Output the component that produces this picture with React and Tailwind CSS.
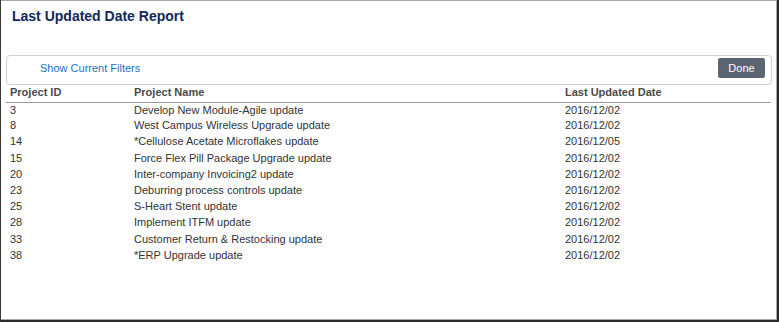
const rows = [
  ["3", "Develop New Module-Agile update", "2016/12/02"],
  ["8", "West Campus Wireless Upgrade update", "2016/12/02"],
  ["14", "*Cellulose Acetate Microflakes update", "2016/12/05"],
  ["15", "Force Flex Pill Package Upgrade update", "2016/12/02"],
  ["20", "Inter-company Invoicing2 update", "2016/12/02"],
  ["23", "Deburring process controls update", "2016/12/02"],
  ["25", "S-Heart Stent update", "2016/12/02"],
  ["28", "Implement ITFM update", "2016/12/02"],
  ["33", "Customer Return & Restocking update", "2016/12/02"],
  ["38", "*ERP Upgrade update", "2016/12/02"],
];

export default function App() {
  return (
    <div
      className="w-[779px] h-[322px] bg-white border-r-2 border-b-2 border-[#2b2b2b] border-l border-l-[#3a3a3a]"
      style={{ fontFamily: '"Liberation Sans", Arial, sans-serif' }}
    >
      <div className="h-full border-t border-r border-b border-[#a8a8a8] pr-[4px]">
        <h1 className="pl-[11px] pt-[6px] text-[14px] font-bold leading-[18px] text-[#10275a]">
          Last Updated Date Report
        </h1>

        <div className="mt-[30px] ml-[5px] h-[30px] rounded-[4px] border border-[#cfcfcf] flex items-center justify-between pl-[33px] pr-[6px]">
          <span className="text-[11px] text-[#1f6fbf] mt-[-3px]">
            Show Current Filters
          </span>
          <button className="h-[20px] w-[47px] rounded-[2px] bg-[#5d6572] text-[11px] text-white mt-[-4px]">
            Done
          </button>
        </div>

        <table className="ml-[5px] w-[765px] text-[11px] text-[#333] border-collapse">
          <thead>
            <tr className="border-b border-[#9a9a9a]">
              <th className="text-left font-bold text-[#4a4a4a] pl-[4px] pt-[1px] h-[17px] leading-[13px] align-top w-[128px]">
                Project ID
              </th>
              <th className="text-left font-bold text-[#4a4a4a] pt-[1px] leading-[13px] align-top w-[431px]">
                Project Name
              </th>
              <th className="text-left font-bold text-[#4a4a4a] pt-[1px] leading-[13px] align-top">
                Last Updated Date
              </th>
            </tr>
          </thead>
          <tbody>
            {rows.map(([id, name, date]) => (
              <tr key={id} className="h-[16.2px]">
                <td className="pl-[4px] leading-[14px] align-top">{id}</td>
                <td className="leading-[14px] align-top">{name}</td>
                <td className="leading-[14px] align-top">{date}</td>
              </tr>
            ))}
          </tbody>
        </table>
      </div>
    </div>
  );
}
